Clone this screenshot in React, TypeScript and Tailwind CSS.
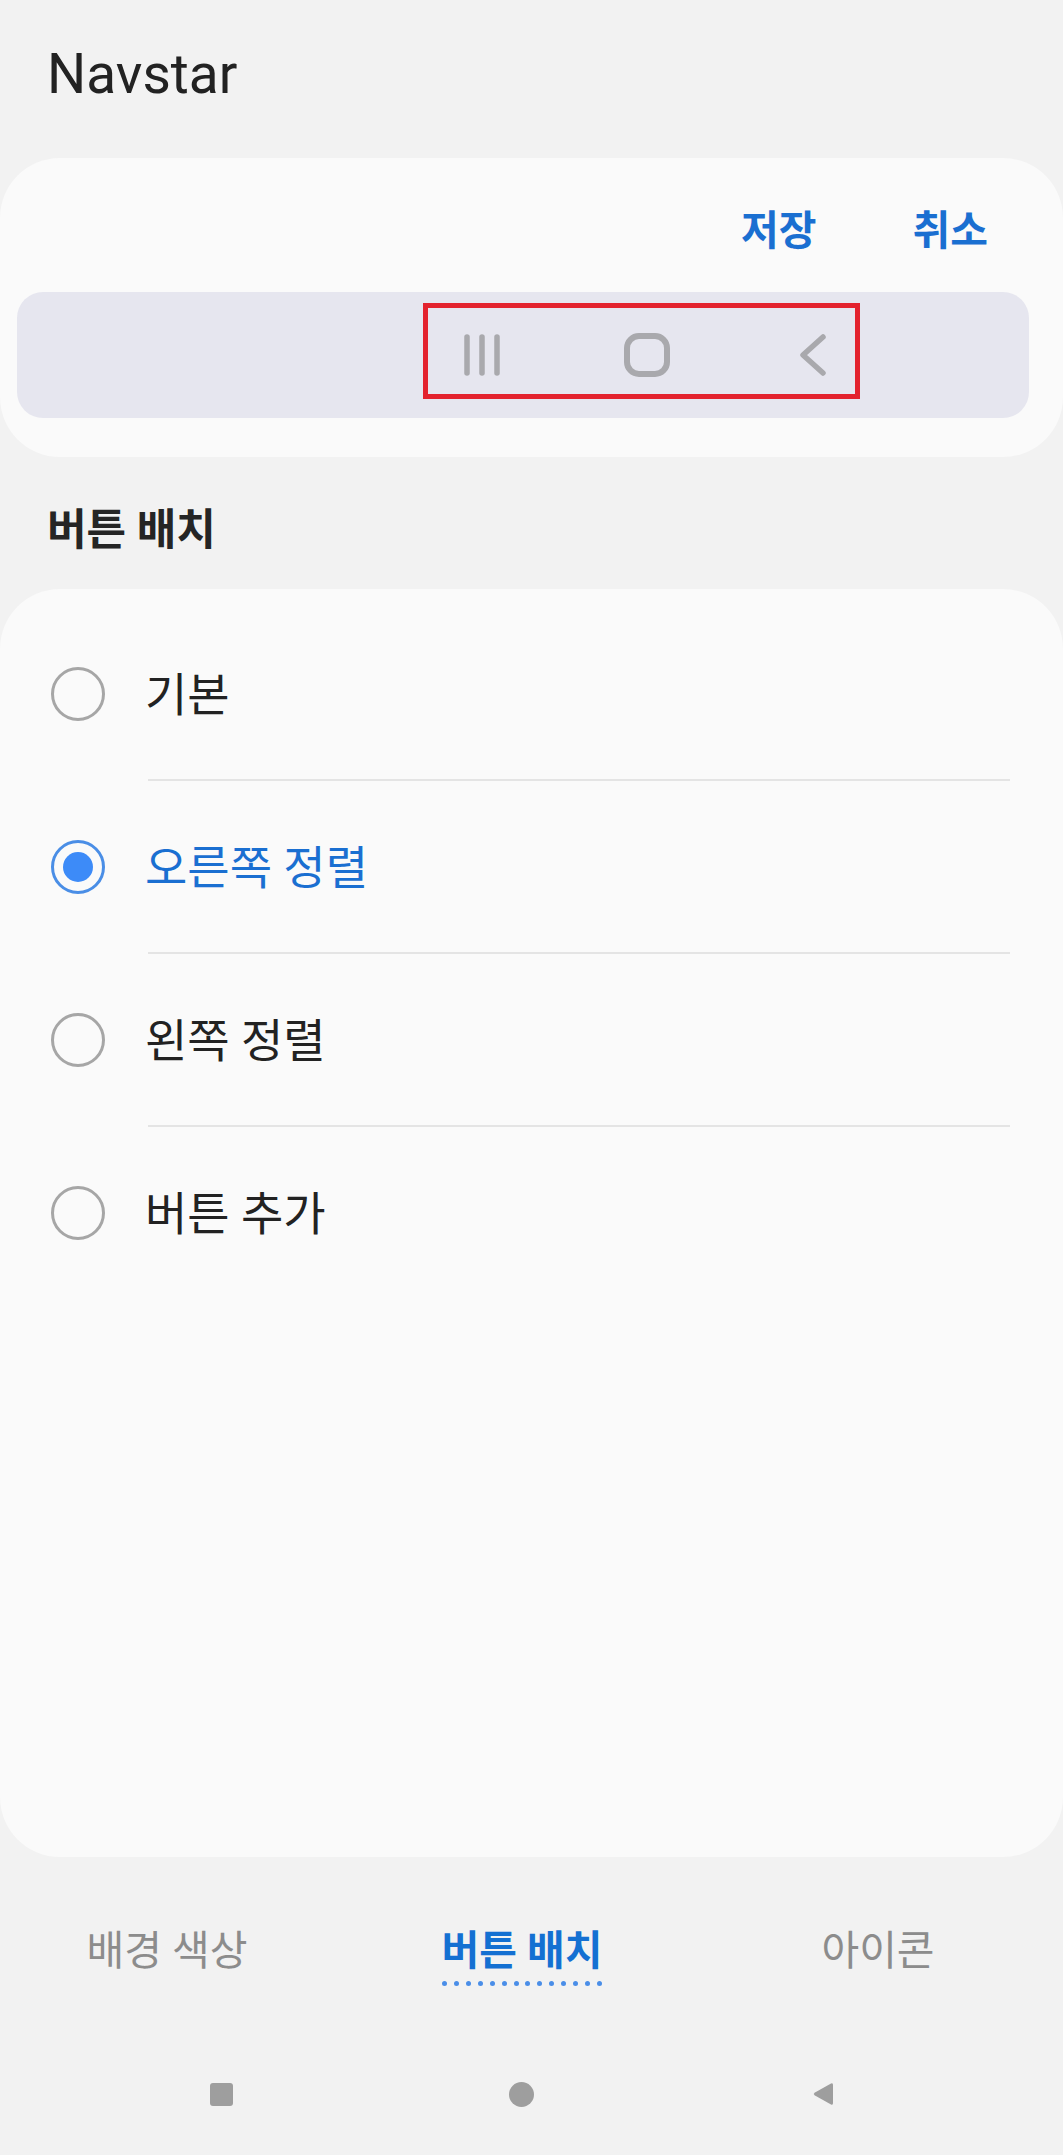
import React from 'react';

const options = [
  { label: '기본', selected: false },
  { label: '오른쪽 정렬', selected: true },
  { label: '왼쪽 정렬', selected: false },
  { label: '버튼 추가', selected: false },
];

function Radio({ selected }: { selected: boolean }) {
  if (selected) {
    return (
      <div className="w-[54px] h-[54px] rounded-full border-[3px] border-[#4a8ee6] flex items-center justify-center shrink-0">
        <div className="w-[30px] h-[30px] rounded-full bg-[#3d8bf8]" />
      </div>
    );
  }
  return <div className="w-[54px] h-[54px] rounded-full border-[3px] border-[#a6a6a6] shrink-0" />;
}

function NavPreview() {
  return (
    <div className="w-[437px] h-[96px] border-[5px] border-[#e3222e] flex items-center pt-[8px]">
      {/* recents */}
      <svg width="40" height="44" viewBox="0 0 40 44" className="ml-[34px]">
        <g stroke="#a9a9ad" strokeWidth="5.5" strokeLinecap="round">
          <line x1="5" y1="4" x2="5" y2="40" />
          <line x1="20" y1="4" x2="20" y2="40" />
          <line x1="35" y1="4" x2="35" y2="40" />
        </g>
      </svg>
      {/* home */}
      <svg width="46" height="44" viewBox="0 0 46 44" className="ml-[122px]">
        <rect x="3" y="3" width="40" height="38" rx="12" fill="none" stroke="#a9a9ad" strokeWidth="6" />
      </svg>
      {/* back */}
      <svg width="30" height="44" viewBox="0 0 30 44" className="ml-[128px]">
        <polyline points="25,4 5,22 25,40" fill="none" stroke="#a9a9ad" strokeWidth="5.5" strokeLinecap="round" strokeLinejoin="round" />
      </svg>
    </div>
  );
}

export default function App() {
  return (
    <div className="w-[1063px] h-[2155px] bg-[#f2f2f2] flex flex-col overflow-hidden font-[Roboto,'Noto_Sans_CJK_KR',sans-serif]">
      {/* Title */}
      <div className="h-[158px] shrink-0 pl-[47px] pt-[47px]">
        <h1 className="text-[55px] leading-none text-[#222222]">Navstar</h1>
      </div>

      {/* Preview card */}
      <div className="h-[299px] shrink-0 rounded-[60px] bg-[#fafafa] flex flex-col">
        <div className="h-[134px] flex items-center justify-end gap-[96px] pr-[75px] pt-[13px] text-[41px] leading-none font-bold text-[#1a6fd1]">
          <span>저장</span>
          <span>취소</span>
        </div>
        <div className="ml-[17px] mr-[34px] h-[126px] rounded-[26px] bg-[#e6e6ef] pl-[406px] pt-[11px]">
          <NavPreview />
        </div>
      </div>

      {/* Section heading */}
      <div className="h-[132px] shrink-0 pl-[47px] pt-[52px]">
        <h2 className="text-[43px] leading-none font-bold text-[#252525]">버튼 배치</h2>
      </div>

      {/* Options card */}
      <div className="h-[1268px] shrink-0 rounded-[60px] bg-[#fafafa] pt-[19px]">
        {options.map((o, i) => (
          <div key={o.label}>
            <div className="h-[171px] flex items-center pl-[51px] gap-[40px]">
              <Radio selected={o.selected} />
              <span className={`text-[46px] leading-none pt-[2px] ${o.selected ? 'text-[#1a6fd1]' : 'text-[#222222]'}`}>
                {o.label}
              </span>
            </div>
            {i < options.length - 1 && <div className="h-[2px] ml-[148px] mr-[53px] bg-[#e4e4e4]" />}
          </div>
        ))}
      </div>

      {/* Tabs */}
      <div className="h-[160px] shrink-0 grid grid-cols-[334px_376px_336px] items-start pt-[74px] text-[41px] leading-none">
        <div className="flex justify-center text-[#8c8c8c]">배경 색상</div>
        <div className="flex flex-col items-center">
          <span className="font-bold text-[#1470d2]">버튼 배치</span>
          <div className="mt-[9px] w-[160px] flex justify-between">
            {Array.from({ length: 14 }).map((_, i) => (
              <span key={i} className="w-[5px] h-[5px] rounded-full bg-[#4a8ee8]" />
            ))}
          </div>
        </div>
        <div className="flex justify-center text-[#8c8c8c]">아이콘</div>
      </div>

      {/* System nav bar */}
      <div className="h-[138px] shrink-0 grid grid-cols-[442px_158px_446px] items-center pt-[16px]">
        <div className="flex justify-center">
          <div className="w-[23px] h-[23px] rounded-[3px] bg-[#9e9e9e]" />
        </div>
        <div className="flex justify-center">
          <div className="w-[25px] h-[25px] rounded-full bg-[#9e9e9e]" />
        </div>
        <div className="flex justify-center">
          <svg width="22" height="24" viewBox="0 0 22 24">
            <path d="M19 1.5 Q21 0.5 21 3 L21 21 Q21 23.5 19 22.5 L2.5 13.2 Q1 12 2.5 10.8 Z" fill="#9e9e9e" />
          </svg>
        </div>
      </div>
    </div>
  );
}
